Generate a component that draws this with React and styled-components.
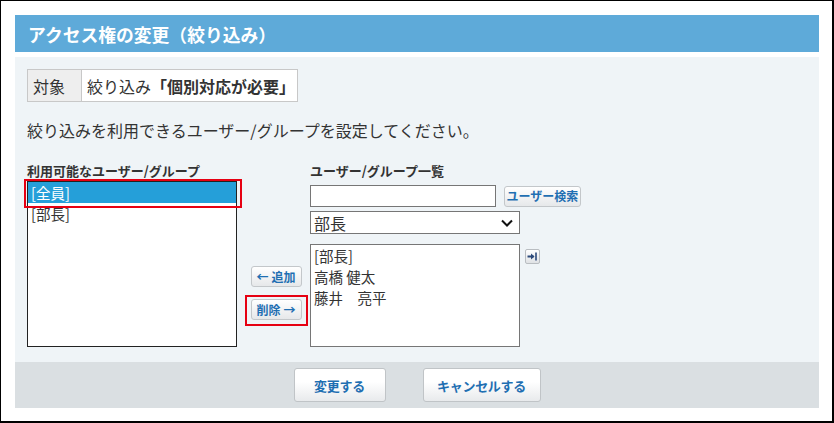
import React from "react";
import styled, { createGlobalStyle } from "styled-components";

const Global = createGlobalStyle`
  html, body { margin: 0; padding: 0; background: #fff; }
  body { font-family: "Noto Sans CJK JP", "Noto Sans", sans-serif; color: #333; }
  * { box-sizing: border-box; }
`;

const Frame = styled.div`
  width: 834px;
  height: 423px;
  border-style: solid;
  border-color: #000;
  border-width: 1px 2px 2px 1px;
  padding: 14px 13px 13px 14px;
  display: flex;
  flex-direction: column;
  background: #fff;
`;

const Header = styled.div`
  height: 37px;
  background: #5eaad9;
  color: #fff;
  font-weight: 700;
  font-size: 17.8px;
  display: flex;
  align-items: center;
  padding-left: 13px;
`;

const Panel = styled.div`
  margin-top: 5px;
  height: 305px;
  background: #eff4f7;
  padding: 12px 12px 0 12px;
  display: flex;
  flex-direction: column;
`;

const InfoTable = styled.div`
  display: flex;
  align-self: flex-start;
  height: 33px;
  border: 1px solid #c8c8c8;
  font-size: 16px;
  color: #333;
  white-space: nowrap;
`;

const InfoLabel = styled.div`
  width: 54px;
  background: #eeeeee;
  border-right: 1px solid #c8c8c8;
  display: flex;
  align-items: center;
  padding-left: 5px;
`;

const InfoValue = styled.div`
  background: #fff;
  display: flex;
  align-items: center;
  padding: 0 2px 0 5px;
  b { font-weight: 700; }
`;

const Description = styled.p`
  margin: 17px 0 0 0;
  font-size: 16px;
  line-height: 22px;
  color: #333;
`;

const Columns = styled.div`
  display: flex;
  margin-top: 21px;
`;

const Column = styled.div`
  display: flex;
  flex-direction: column;
  width: ${(p) => p.$w}px;
`;

const ColLabel = styled.div`
  font-size: 13px;
  font-weight: 700;
  line-height: 18px;
  color: #333;
  height: 18px;
  white-space: nowrap;
`;

const ListBox = styled.div`
  position: relative;
  margin-top: ${(p) => p.$mt || 0}px;
  width: ${(p) => p.$w}px;
  height: ${(p) => p.$h}px;
  background: #fff;
  border: 1px solid ${(p) => p.$bc || "#222"};
  padding: ${(p) => p.$pad || "0"};
`;

const ListItem = styled.div`
  font-size: 14.5px;
  line-height: 21px;
  height: 21px;
  padding-left: 3px;
  color: ${(p) => (p.$sel ? "#fff" : "#333")};
  background: ${(p) => (p.$sel ? "#259fd9" : "transparent")};
  white-space: pre;
`;

const Highlight = styled.div`
  position: absolute;
  left: -4px;
  top: -3px;
  width: 218px;
  height: 29px;
  border: 2px solid #e60012;
  pointer-events: none;
`;

const MidColumn = styled.div`
  width: 62px;
  margin-left: 8px;
  margin-right: 3px;
  display: flex;
  flex-direction: column;
  align-items: center;
  padding-top: 104px;
`;

const SmallButton = styled.button`
  font-family: inherit;
  font-size: 12px;
  font-weight: 700;
  color: #1f6fb2;
  height: 21px;
  width: ${(p) => p.$w || 51}px;
  padding: 0;
  border: 1px solid #c3c7ca;
  border-radius: 3px;
  background: linear-gradient(#ffffff, #e6e8ea);
  display: flex;
  align-items: center;
  justify-content: center;
  gap: 3px;
  line-height: 1;
  white-space: nowrap;
  cursor: pointer;
`;

const RedBox = styled.div`
  margin-top: 8px;
  border: 2px solid #e60012;
  padding: 2px 4px 4px 4px;
`;

const Row = styled.div`
  display: flex;
  align-items: center;
  gap: ${(p) => p.$gap || 0}px;
  margin-top: ${(p) => p.$mt || 0}px;
`;

const TextInput = styled.input`
  width: 186px;
  height: 22px;
  border: 1px solid #767676;
  background: #fff;
  padding: 0 4px;
  font-family: inherit;
  font-size: 14px;
  outline: none;
`;

const Select = styled.div`
  width: 210px;
  height: 23px;
  border: 1px solid #767676;
  background: #fff;
  display: flex;
  align-items: center;
  justify-content: space-between;
  padding: 0 6px 0 3px;
  font-size: 16px;
  color: #333;
`;

const IconBtn = styled.button`
  width: 15px;
  height: 15px;
  padding: 0;
  border: 1px solid #b9bdc1;
  border-radius: 2px;
  background: linear-gradient(#ffffff, #dfe2e5);
  display: flex;
  align-items: center;
  justify-content: center;
  align-self: flex-start;
  margin-top: 5px;
`;

const Footer = styled.div`
  height: 46px;
  background: #dadfe2;
  display: flex;
  align-items: center;
  justify-content: center;
  gap: 37px;
`;

const FootButton = styled.button`
  font-family: inherit;
  font-size: 13px;
  font-weight: 700;
  color: #1f6fb2;
  height: 34px;
  width: ${(p) => p.$w}px;
  border: 1px solid #c0c4c7;
  border-radius: 3px;
  background: linear-gradient(#ffffff 40%, #e8eaec);
  letter-spacing: -0.3px;
  cursor: pointer;
`;

export default function App() {
  return (
    <>
      <Global />
      <Frame>
        <Header>アクセス権の変更（絞り込み）</Header>
        <Panel>
          <InfoTable>
            <InfoLabel>対象</InfoLabel>
            <InfoValue>
              絞り込み<b>「個別対応が必要」</b>
            </InfoValue>
          </InfoTable>
          <Description>絞り込みを利用できるユーザー/グループを設定してください。</Description>
          <Columns>
            <Column $w={210}>
              <ColLabel>利用可能なユーザー/グループ</ColLabel>
              <ListBox $w={210} $h={166} $mt={1}>
                <ListItem $sel>[全員]</ListItem>
                <ListItem>[部長]</ListItem>
                <Highlight />
              </ListBox>
            </Column>
            <MidColumn>
              <SmallButton>
                <span>←</span>
                <span>追加</span>
              </SmallButton>
              <RedBox>
                <SmallButton>
                  <span>削除</span>
                  <span>→</span>
                </SmallButton>
              </RedBox>
            </MidColumn>
            <Column $w={280}>
              <ColLabel>ユーザー/グループ一覧</ColLabel>
              <Row $gap={8} $mt={5}>
                <TextInput />
                <SmallButton $w={77}>ユーザー検索</SmallButton>
              </Row>
              <Row $mt={4}>
                <Select>
                  <span>部長</span>
                  <svg width="12" height="8" viewBox="0 0 12 8">
                    <path d="M1 1.5 L6 6.5 L11 1.5" fill="none" stroke="#111" strokeWidth="2" />
                  </svg>
                </Select>
              </Row>
              <Row $mt={10} $gap={5}>
                <ListBox $w={210} $h={103} $bc="#767676">
                  <ListItem>[部長]</ListItem>
                  <ListItem>高橋 健太</ListItem>
                  <ListItem>藤井　亮平</ListItem>
                </ListBox>
                <IconBtn>
                  <svg width="11" height="9" viewBox="0 0 11 9">
                    <path d="M0.5 4.5 H6.5" stroke="#2d4a7a" strokeWidth="2" />
                    <path d="M4 1.5 L7.5 4.5 L4 7.5 Z" fill="#2d4a7a" />
                    <path d="M9 0.5 V8.5" stroke="#2d4a7a" strokeWidth="1.6" />
                  </svg>
                </IconBtn>
              </Row>
            </Column>
          </Columns>
        </Panel>
        <Footer>
          <FootButton $w={92}>変更する</FootButton>
          <FootButton $w={118}>キャンセルする</FootButton>
        </Footer>
      </Frame>
    </>
  );
}
